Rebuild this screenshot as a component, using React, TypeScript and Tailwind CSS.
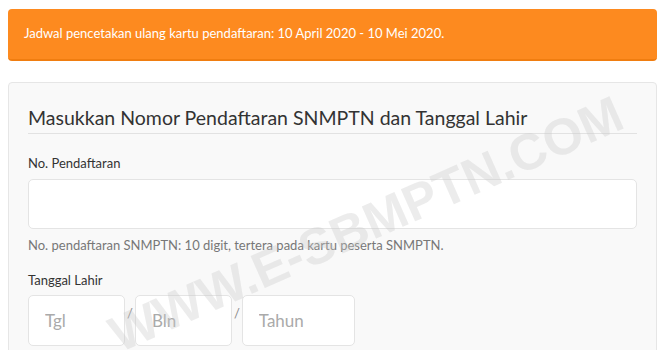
export default function App() {
  return (
    <div className="relative h-[350px] w-[665px] overflow-hidden bg-white font-['Lato',sans-serif] text-[#333]">
      {/* Alert */}
      <div className="mx-2 mt-[9px] flex h-[52px] items-center rounded-[4px] border-b-2 border-[#f07d10] bg-[#fd8a1f] px-4 text-[13px] text-white">
        Jadwal pencetakan ulang kartu pendaftaran: 10 April 2020 - 10 Mei 2020.
      </div>

      {/* Form card */}
      <div className="mx-2 mt-[21px] h-[300px] rounded-t-[4px] border border-[#e6e6e6] bg-[#f9f9f9] px-[19px] pt-[22px]">
        <h2 className="border-b border-[#e2e2e2] pb-[2px] text-[19.5px] font-normal leading-[26px] text-[#333]">
          Masukkan Nomor Pendaftaran SNMPTN dan Tanggal Lahir
        </h2>

        <label className="mt-[20px] block text-[13px] text-[#333]">No. Pendaftaran</label>
        <input className="mt-[5px] block h-[50px] w-full rounded-[5px] border border-[#e4e4e4] bg-white outline-none" />
        <p className="mt-[7px] text-[13px] text-[#777]">No. pendaftaran SNMPTN: 10 digit, tertera pada kartu peserta SNMPTN.</p>

        <label className="mt-[16px] block text-[13px] text-[#333]">Tanggal Lahir</label>
        <div className="mt-[4px] flex items-center">
          <input placeholder="Tgl" className="h-[51px] w-[97px] rounded-[5px] border border-[#e4e4e4] bg-white px-4 text-[17px] placeholder:text-[#aaa] outline-none" />
          <span className="mx-[2px] -mt-[12px] text-[13px] text-[#888]">/</span>
          <input placeholder="Bln" className="h-[51px] w-[97px] rounded-[5px] border border-[#e4e4e4] bg-white px-4 text-[17px] placeholder:text-[#aaa] outline-none" />
          <span className="mx-[2px] -mt-[12px] text-[13px] text-[#888]">/</span>
          <input placeholder="Tahun" className="h-[51px] w-[113px] rounded-[5px] border border-[#e4e4e4] bg-white px-4 text-[17px] placeholder:text-[#aaa] outline-none" />
        </div>
      </div>

      {/* Watermark */}
      <div className="pointer-events-none absolute left-[366px] top-[224px] -translate-x-1/2 -translate-y-1/2 -rotate-[24deg] whitespace-nowrap font-['Liberation_Sans',sans-serif] text-[51px] font-bold leading-none text-[#c8c8c8]/35">
        WWW.E-SBMPTN.COM
      </div>
    </div>
  );
}
